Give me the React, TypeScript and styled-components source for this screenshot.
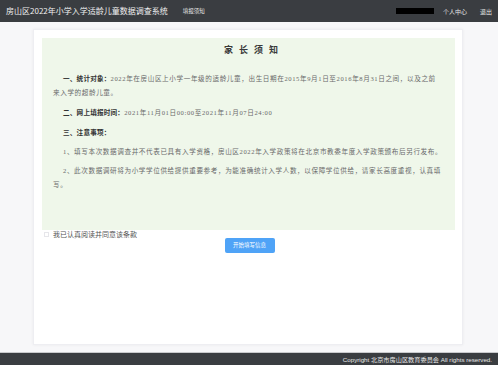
import React from "react";
import styled, { createGlobalStyle } from "styled-components";

const GlobalStyle = createGlobalStyle`
  html, body { margin: 0; padding: 0; }
  body {
    background: #f7f7f9;
    font-family: "Noto Sans CJK SC", "Noto Sans", sans-serif;
  }
  * { box-sizing: border-box; }
`;

const Page = styled.div`
  display: flex;
  flex-direction: column;
  width: 498px;
  height: 365px;
  overflow: hidden;
`;

const Header = styled.header`
  flex: 0 0 22px;
  display: flex;
  align-items: center;
  padding: 0 6px;
  background: #3a3d41;
  color: #f0f0f0;
`;

const SiteTitle = styled.div`
  font-size: 8px;
  line-height: 22px;
  white-space: nowrap;
`;

const NavLink = styled.a<{ $size?: number }>`
  font-size: ${(p) => p.$size ?? 6}px;
  color: #e6e6e6;
  text-decoration: none;
  white-space: nowrap;
`;

const LeftNav = styled.nav`
  display: flex;
  margin-left: 15px;
`;

const RightNav = styled.nav`
  margin-left: auto;
  display: flex;
  align-items: center;
  gap: 13px;
`;

const Redacted = styled.span`
  display: block;
  width: 38px;
  height: 6px;
  background: #000;
  margin-right: -4px;
`;

const Main = styled.main`
  flex: 1;
  display: flex;
  padding: 7px 35px 7px 33px;
  min-height: 0;
`;

const Card = styled.section`
  flex: 1;
  display: flex;
  flex-direction: column;
  background: #fff;
  border: 1px solid #eeeef2;
  box-shadow: 0 0 3px rgba(0, 0, 0, 0.06);
  padding: 8px 7px 8px 8px;
`;

const Notice = styled.div`
  background: #eff7ea;
  padding: 5px 4px 38px 11px;
`;

const NoticeTitle = styled.h1`
  margin: 0 0 14px;
  text-align: center;
  font-family: "Liberation Serif", "Noto Sans CJK SC", serif;
  font-size: 9px;
  line-height: 14px;
  font-weight: bold;
  letter-spacing: 6px;
  color: #3a3a3a;
  padding-left: 4px;
`;

const Para = styled.div`
  margin: 0 0 5px;
  font-family: "Liberation Serif", "Noto Sans CJK SC", serif;
  font-size: 6.6px;
  line-height: 14px;
  letter-spacing: 0.6px;
  color: #6a6a6a;
  white-space: nowrap;
  &:last-child { margin-bottom: 0; }
`;

const Line = styled.span<{ $first?: boolean }>`
  display: block;
  padding-left: ${(p) => (p.$first ? 10 : 0)}px;
`;

const Label = styled.b`
  font-family: "Noto Sans CJK SC", sans-serif;
  font-weight: bold;
  color: #333;
  letter-spacing: 0.2px;
`;

const ConsentRow = styled.label`
  display: flex;
  align-items: center;
  gap: 4px;
  height: 8px;
  margin-left: 2px;
  font-size: 7px;
  line-height: 8px;
  color: #555;
`;

const CheckBox = styled.span`
  display: block;
  width: 5px;
  height: 5px;
  border: 1px solid #e6e6ea;
  background: #fff;
`;

const ButtonRow = styled.div`
  display: flex;
  justify-content: center;
  padding-left: 2px;
`;

const StartButton = styled.button`
  width: 50px;
  height: 15px;
  padding: 0;
  border: none;
  border-radius: 2px;
  background: #4fa3f7;
  color: #fff;
  font-family: "Noto Sans CJK SC", sans-serif;
  font-size: 5.5px;
  line-height: 15px;
  cursor: pointer;
`;

const Footer = styled.footer`
  flex: 0 0 13px;
  display: flex;
  align-items: center;
  justify-content: flex-end;
  padding: 0 6px;
  background: #3a3d41;
  border-top: 1px solid #c9cacd;
  color: #e8e8e8;
  font-family: "Liberation Sans", "Noto Sans CJK SC", sans-serif;
  font-size: 6.2px;
  white-space: nowrap;
`;

export default function App() {
  return (
    <>
      <GlobalStyle />
      <Page>
        <Header>
          <SiteTitle>房山区2022年小学入学适龄儿童数据调查系统</SiteTitle>
          <LeftNav>
            <NavLink $size={5.5}>填报须知</NavLink>
          </LeftNav>
          <RightNav>
            <Redacted />
            <NavLink>个人中心</NavLink>
            <NavLink>退出</NavLink>
          </RightNav>
        </Header>
        <Main>
          <Card>
            <Notice>
              <NoticeTitle>家长须知</NoticeTitle>
              <Para>
                <Line $first>
                  <Label>一、统计对象：</Label>2022年在房山区上小学一年级的适龄儿童，出生日期在2015年9月1日至2016年8月31日之间，以及之前
                </Line>
                <Line>来入学的超龄儿童。</Line>
              </Para>
              <Para>
                <Line $first>
                  <Label>二、网上填报时间：</Label>2021年11月01日00:00至2021年11月07日24:00
                </Line>
              </Para>
              <Para>
                <Line $first>
                  <Label>三、注意事项：</Label>
                </Line>
              </Para>
              <Para>
                <Line $first>
                  1、填写本次数据调查并不代表已具有入学资格，房山区2022年入学政策将在北京市教委年度入学政策颁布后另行发布。
                </Line>
              </Para>
              <Para>
                <Line $first>
                  2、此次数据调研将为小学学位供给提供重要参考，为能准确统计入学人数，以保障学位供给，请家长高度重视，认真填
                </Line>
                <Line>写。</Line>
              </Para>
            </Notice>
            <ConsentRow>
              <CheckBox />
              我已认真阅读并同意该条款
            </ConsentRow>
            <ButtonRow>
              <StartButton>开始填写信息</StartButton>
            </ButtonRow>
          </Card>
        </Main>
        <Footer>Copyright 北京市房山区教育委员会 All rights reserved.</Footer>
      </Page>
    </>
  );
}
